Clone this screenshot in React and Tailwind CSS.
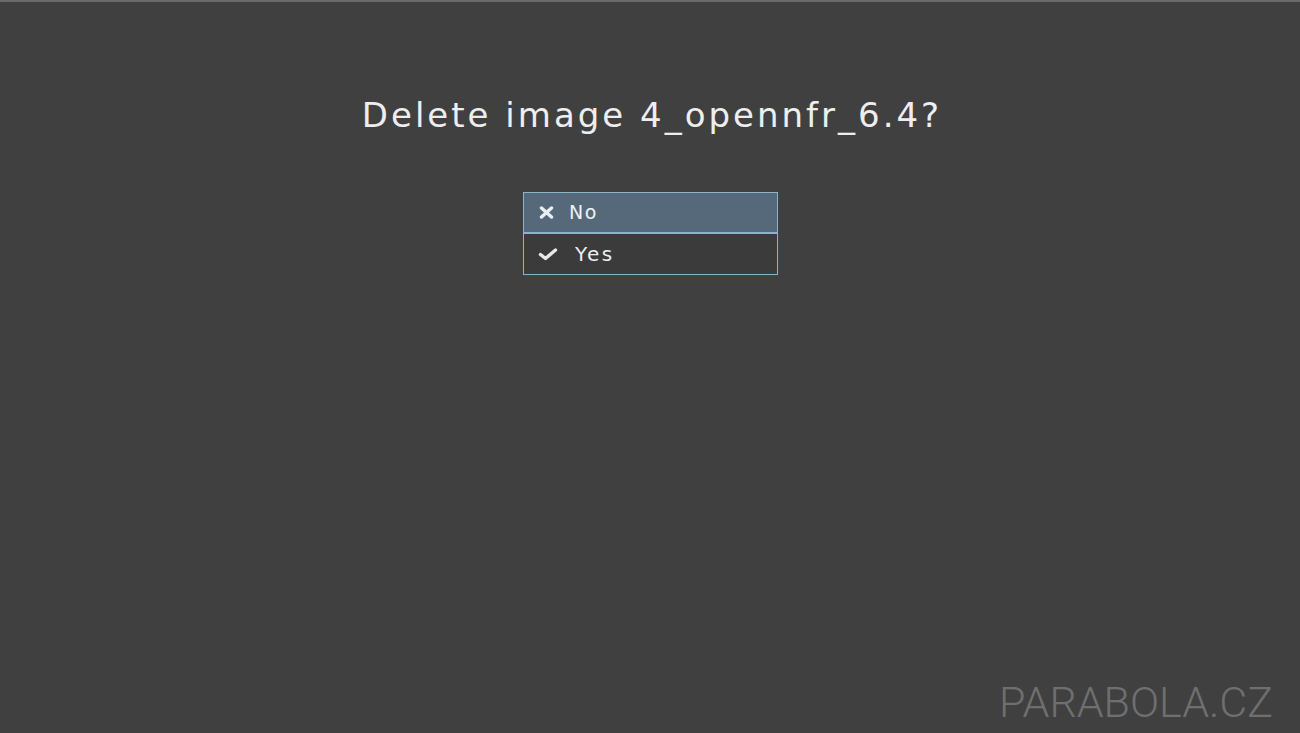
import React from 'react'

const XIcon = () => (
  <svg width="15" height="13" viewBox="0 0 15 13" className="shrink-0">
    <path d="M2.5 2 L12.5 11 M12.5 2 L2.5 11" stroke="#e8eef2" strokeWidth="3.4" strokeLinecap="round" />
  </svg>
)

const CheckIcon = () => (
  <svg width="20" height="14" viewBox="0 0 20 14" className="shrink-0">
    <path d="M2.5 7.5 L7.5 11.5 L17.5 3" stroke="#e8e8e8" strokeWidth="3.4" strokeLinecap="round" strokeLinejoin="round" fill="none" />
  </svg>
)

export default function App() {
  return (
    <div className="w-[1300px] h-[733px] bg-[#404040] relative overflow-hidden flex flex-col border-t-2 border-[#6a6a6a]" style={{ fontFamily: '"DejaVu Sans", sans-serif' }}>
      {/* Title */}
      <div className="pt-[92px] flex justify-center">
        <h1 className="text-[34px] leading-[42px] text-[#eeeeee] tracking-[3px] ml-[4px]">
          Delete image 4_opennfr_6.4?
        </h1>
      </div>

      {/* Choice list */}
      <div className="mt-[56px] flex justify-center">
        <div className="w-[255px] border border-[#8db2cc] bg-[#3b3b3b] ml-[1px]">
          <div className="h-[41px] bg-[#56697a] border-b-2 border-[#8db2cc] flex items-center pl-[15px] gap-[15px]">
            <XIcon />
            <span className="text-[19px] tracking-[1.5px] text-[#eef2f5]">No</span>
          </div>
          <div className="h-[40px] flex items-center pl-[14px] gap-[17px]">
            <CheckIcon />
            <span className="text-[20px] tracking-[2.5px] text-[#eeeeee]">Yes</span>
          </div>
        </div>
      </div>

      {/* Watermark */}
      <div className="absolute right-[27px] bottom-[6px] text-[43px] leading-[50px] text-[#6f6f6f] font-light" style={{ fontFamily: 'Roboto, sans-serif' }}>
        PARABOLA.CZ
      </div>
    </div>
  )
}
